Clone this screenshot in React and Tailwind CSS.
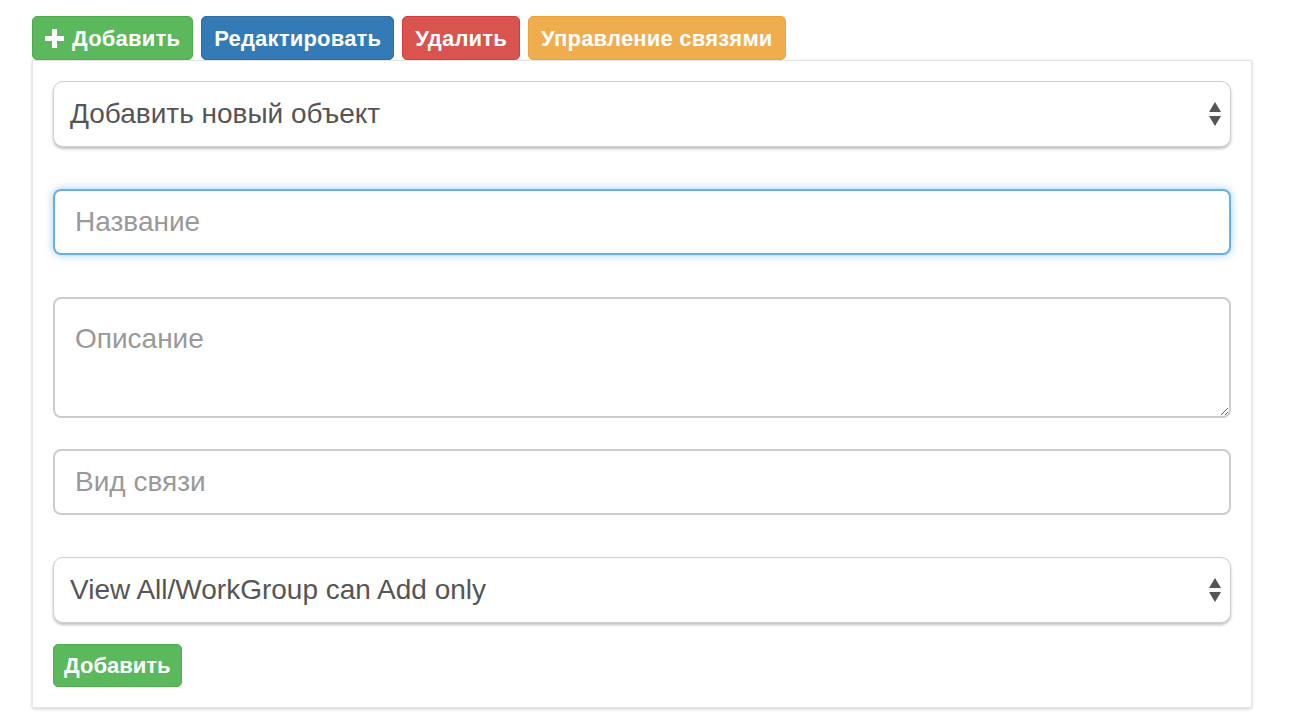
import React, { useState } from 'react';

const font = { fontFamily: '"Liberation Sans", Arial, sans-serif' };

const ArrowsIcon = () => (
  <svg width="14" height="26" viewBox="0 0 14 26" className="shrink-0">
    <path d="M7 1 L13 11 L1 11 Z" fill="#555" />
    <path d="M1 15 L13 15 L7 25 Z" fill="#555" />
  </svg>
);

const FakeSelect = ({ value }) => (
  <div className="flex items-center justify-between h-[66px] pl-[16px] pr-[8px] bg-white border border-[#d0d0d0] rounded-[10px] shadow-[0_2px_3px_rgba(0,0,0,0.25)]">
    <span className="text-[28px] text-[#555]">{value}</span>
    <ArrowsIcon />
  </div>
);

const TopButton = ({ color, children }) => (
  <button className={`h-[44px] px-[12px] rounded-[5px] border text-white text-[22px] font-bold tracking-[0.2px] flex items-center gap-[8px] ${color}`}>
    {children}
  </button>
);

const App = () => {
  const [name, setName] = useState('');
  const [desc, setDesc] = useState('');
  const [kind, setKind] = useState('');

  return (
    <div className="min-h-screen bg-white" style={font}>
      <div className="pl-[32px] pt-[16px] w-[1252px]">
        <div className="flex gap-[8px]">
          <TopButton color="bg-[#5cb85c] border-[#4cae4c]">
            <svg width="19" height="19" viewBox="0 0 19 19">
              <rect x="7" y="0" width="5" height="19" fill="#fff" />
              <rect x="0" y="7" width="19" height="5" fill="#fff" />
            </svg>
            Добавить
          </TopButton>
          <TopButton color="bg-[#337ab7] border-[#2e6da4]">Редактировать</TopButton>
          <TopButton color="bg-[#d9534f] border-[#d43f3a]">Удалить</TopButton>
          <TopButton color="bg-[#f0ad4e] border-[#eea236]">Управление связями</TopButton>
        </div>

        <div className="bg-white border border-[#e6e6e6] shadow-[0_1px_3px_rgba(0,0,0,0.2)] px-[20px] pt-[20px] pb-[20px]">
          <FakeSelect value="Добавить новый объект" />

          <input
            value={name}
            onChange={e => setName(e.target.value)}
            placeholder="Название"
            className="mt-[42px] w-full h-[66px] px-[20px] text-[28px] text-[#555] placeholder:text-[#999] bg-white border-2 border-[#66afe9] rounded-[8px] shadow-[0_0_8px_rgba(102,175,233,0.6)] outline-none"
          />

          <textarea
            value={desc}
            onChange={e => setDesc(e.target.value)}
            placeholder="Описание"
            className="mt-[42px] block w-full h-[121px] px-[20px] pt-[24px] text-[28px] leading-[32px] text-[#555] placeholder:text-[#999] bg-white border-2 border-[#ccc] rounded-[8px] outline-none resize-y"
          />

          <input
            value={kind}
            onChange={e => setKind(e.target.value)}
            placeholder="Вид связи"
            className="mt-[31px] w-full h-[66px] px-[20px] text-[28px] text-[#555] placeholder:text-[#999] bg-white border-2 border-[#ccc] rounded-[8px] outline-none"
          />

          <div className="mt-[42px]">
            <FakeSelect value="View All/WorkGroup can Add only" />
          </div>

          <button className="mt-[21px] h-[43px] px-[10px] rounded-[5px] border border-[#4cae4c] bg-[#5cb85c] text-white text-[22px] font-bold">
            Добавить
          </button>
        </div>
      </div>
    </div>
  );
};

export default App;
